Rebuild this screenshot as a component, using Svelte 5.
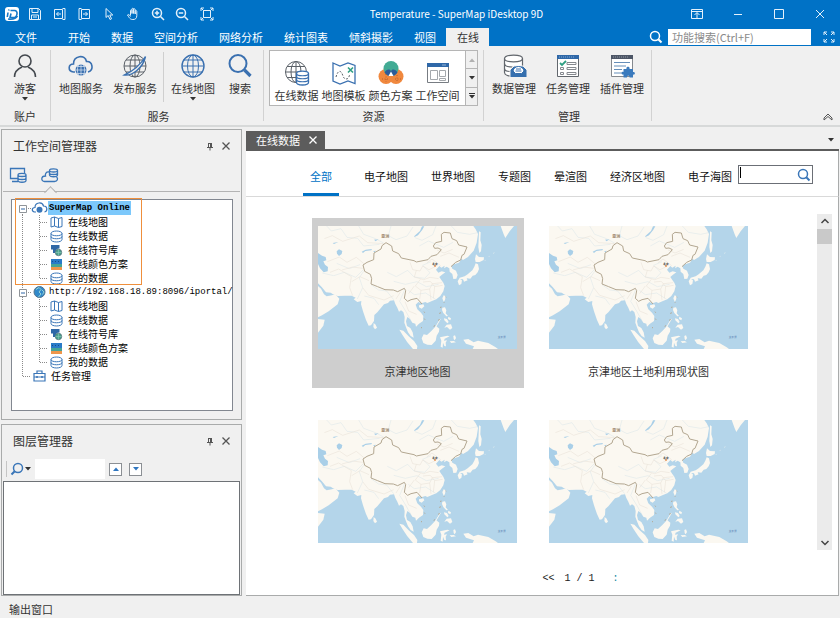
<script lang="ts">
	type Node = { text: string; icon: string; guides: string[]; latin?: boolean };

	const quick = ['save', 'back', 'forward', 'pointer', 'hand', 'zoomin', 'zoomout', 'extent'];
	const menus = ['开始', '数据', '空间分析', '网络分析', '统计图表', '倾斜摄影', '视图', '在线'];
	const gallery = [
		{ text: '在线数据', icon: 'globedata' },
		{ text: '地图模板', icon: 'template' },
		{ text: '颜色方案', icon: 'colors' },
		{ text: '工作空间', icon: 'workspace' }
	];
	const manage = [
		{ text: '数据管理', icon: 'datamgr' },
		{ text: '任务管理', icon: 'taskmgr' },
		{ text: '插件管理', icon: 'plugin' }
	];
	const children = [
		{ text: '在线地图', icon: 'map' },
		{ text: '在线数据', icon: 'db' },
		{ text: '在线符号库', icon: 'symbol' },
		{ text: '在线颜色方案', icon: 'scheme' },
		{ text: '我的数据', icon: 'db' }
	];
	const branch: Node[] = children.map((c, i) => ({
		...c,
		guides: ['line', i === children.length - 1 ? 'elbow' : 'tee']
	}));
	const tree: Node[] = [
		{ text: 'SuperMap Online', icon: 'cloud', guides: ['first'], latin: true },
		...branch,
		{ text: 'http://192.168.18.89:8096/iportal/', icon: 'earth', guides: ['box'], latin: true },
		...branch,
		{ text: '任务管理', icon: 'case', guides: ['elbow'] }
	];
	const categories = ['全部', '电子地图', '世界地图', '专题图', '晕渲图', '经济区地图', '电子海图'];
	const cards = ['京津地区地图', '京津地区土地利用现状图', '', ''];

	let activeMenu = $state('在线');
	let activeCategory = $state('全部');
	let selectedCard = $state(0);
	let selectedNode = $state(0);
	let keyword = $state('');
	let layerFilter = $state('');
	let command = $state('');
</script>

{#snippet quickIcon(name: string)}
	<svg class="qi" viewBox="0 0 14 14" aria-hidden="true">
		{#if name === 'save'}
			<path d="M1.5 1.5h9l2 2v9h-11zM4 1.5v4h6v-4M3.500 12.500v-4.500h7v4.500M5 10h4" />
		{:else if name === 'back'}
			<path d="M1.500 2.500h8v9h-8zM9.500 1.500h2.500v11h-2.500M8 7h-4.500M5.500 5l-2 2 2 2" />
		{:else if name === 'forward'}
			<path d="M4.500 2.500h8v9h-8zM4.500 1.500h-2.500v11h2.500M6 7h4.500M8.500 5l2 2-2 2" />
		{:else if name === 'pointer'}
			<path d="M4 1.500v9l2.200-2 1.800 4 1.500-.7-1.700-3.800h3z" />
		{:else if name === 'hand'}
			<path d="M4.500 8.500v-5c0-1 1.500-1 1.500 0V6.500v-4.500c0-1 1.600-1 1.600 0v4.500-4c0-1 1.600-1 1.600 0v4.500-2.700c0-1 1.600-1 1.600 0v4.200c0 3-1.500 4-3.800 4S4 12 1.500 8c.8-1 2-.3 3 1.500" />
		{:else if name === 'zoomin' || name === 'zoomout'}
			<g stroke-width="1.500">
				<circle cx="6" cy="6" r="4.500" />
				<path d="M9.500 9.500l3.500 3.500M3.800 6h4.400" />
				{#if name === 'zoomin'}<path d="M6 3.800v4.400" />{/if}
			</g>
		{:else}
			<path d="M3.500 3.500h7v7h-7zM1 4v-3h3M10 1h3v3M13 10v3h-3M4 13h-3v-3M1 1l2.500 2.500M13 1l-2.500 2.500M1 13l2.500-2.500M13 13l-2.500-2.500" />
		{/if}
	</svg>
{/snippet}

{#snippet ribbonIcon(name: string)}
	<svg class="ri" viewBox="0 0 26 26" aria-hidden="true">
		{#if name === 'user'}
			<g stroke="#44494f" stroke-width="1.600">
				<circle cx="13" cy="8" r="6" />
				<path d="M2.500 24c0-6 4-8.500 7.500-10M23.500 24c0-6-4-8.500-7.500-10" />
			</g>
		{:else if name === 'cloudmap'}
			<path d="M7 19H5.500C-.5 18.500 0 11 5.500 11 5.500 2.500 17 1 18.500 8.500c6-.5 8 8.500 1.500 10.500" stroke-width="1.600" />
			<circle cx="13" cy="17" r="5.500" fill="#3a70b0" stroke="none" />
			<path d="M7.500 17h11M13 11.500v11M9 13.500h8M9 20.500h8M10.500 12c-1.500 3-1.500 7 0 10M15.500 12c1.500 3 1.500 7 0 10" stroke="#dfe8f3" stroke-width=".7" />
		{:else if name === 'publish'}
			<g stroke="#5b6168">
				<circle cx="13" cy="13" r="11" />
				<ellipse cx="13" cy="13" rx="5" ry="11" />
				<path d="M13 2v22M2 13h22M4 7h18M4 19h18" />
			</g>
			<path d="M2.500 22C10 23 21 15 23.500 3.500 19 11 11 18 2.500 22z" fill="#f0f0f0" stroke-width="1.400" />
		{:else if name === 'globe'}
			<circle cx="13" cy="13" r="11" stroke-width="1.400" />
			<ellipse cx="13" cy="13" rx="5.500" ry="11" />
			<path d="M13 2v22M2 13h22M3.500 7h19M3.500 19h19" />
		{:else if name === 'search'}
			<circle cx="11" cy="10.500" r="8.500" stroke-width="2" />
			<path d="M17.500 17l6 6" stroke-width="3.200" />
		{:else if name === 'globedata'}
			<g stroke="#5b6168">
				<circle cx="12" cy="12" r="10.500" />
				<ellipse cx="12" cy="12" rx="5" ry="10.500" />
				<path d="M12 1.500v21M1.500 12h21M3 6.500h18M3 17.500h18" />
			</g>
			<path d="M12.500 13.500c0-3.300 12-3.300 12 0v9c0 3.300-12 3.300-12 0z" fill="#fff" stroke-width="1.300" />
			<path d="M12.500 13.500c0 3 12 3 12 0M12.500 16.500c0 3 12 3 12 0M12.500 19.500c0 3 12 3 12 0" stroke-width="1.200" />
		{:else if name === 'template'}
			<path d="M2 3l7 3 8-3 7 2.500v18l-7-2.500-8 3-7-3z" stroke-width="1.300" />
			<path d="M5 17c1-4 3-7 5-5s2 7 5 7 3-3 4-5" stroke="#5b6168" stroke-dasharray="2 1.500" />
			<path d="M17 7.500l5 5M22 7.500l-5 5" stroke="#2f9f83" stroke-width="1.600" />
		{:else if name === 'colors'}
			<g stroke="none">
				<circle cx="8" cy="16.500" r="7.500" fill="#f0883e" />
				<circle cx="18" cy="16.500" r="7.500" fill="#f0883e" />
				<circle cx="13" cy="8.500" r="7.500" fill="#42ab94" />
				<path d="M6.500 12.500c1.500-3 5.500-4.500 6.500-1 1-3.500 5-2 6.500 1-2 3-4 3.500-6.500 3.500s-4.500-.5-6.500-3.500z" fill="#2c5c99" />
				<path d="M13 11.500l2.500 4.500h-5z" fill="#fff" />
			</g>
			<path d="M8 14v8M4 19h6M17 19h6M19 15v7" stroke="#a65728" stroke-width=".8" stroke-dasharray="1 1.500" />
		{:else if name === 'workspace'}
			<path d="M2.500 4.500h21v18h-21z" fill="#fff" stroke="#777c82" />
			<path d="M2 3h22v4H2z" fill="#2f68a8" stroke="none" />
			<path d="M17.500 5h4" stroke="#fff" stroke-dasharray="1 1" />
			<path d="M5.500 10.500h7v9h-7zM14.500 10.500h6v6h-6zM14.500 18.500h6v2h-6z" stroke="#a4a8ac" />
		{:else if name === 'datamgr'}
			<path d="M3.500 5.500c0-4.500 18-4.500 18 0v14c0 5-18 5-18 0z" fill="#fff" stroke="#62676d" stroke-width="1.200" />
			<path d="M3.500 5.500c0 4.500 18 4.500 18 0M3.500 10.500c0 2.500 4 3.500 8 3.500M3.500 15.500c0 2 3 3 5.500 3" stroke="#62676d" stroke-width="1.200" />
			<path d="M9 17l4-4h9l4 4v7.500H9z" fill="#356fae" stroke="#f0f0f0" />
			<path d="M12 18c1-6 10-6 11 0l-2.500 2.500h-6z" fill="#fff" stroke="#356fae" />
			<path d="M15 16h5M14.500 18h6" />
		{:else if name === 'taskmgr'}
			<path d="M2.500 3.500h21v20h-21z" fill="#fff" stroke="#62676d" />
			<path d="M2 2h22v4H2z" fill="#2f68a8" stroke="none" />
			<path d="M4 4h16" stroke="#80a7d1" stroke-dasharray="1 1" />
			<path d="M5 10l2 2 4-4" stroke="#2f9f83" stroke-width="1.800" />
			<path d="M12 9.500h9v2h-9zM12 14.500h9v2h-9zM12 19.500h9v2h-9zM5.500 14.500h3v2h-3zM5.500 19.500h3v2h-3z" stroke="#85898e" />
		{:else if name === 'plugin'}
			<path d="M2.500 3.500h21v20h-21z" fill="#fff" stroke="#85898e" />
			<path d="M2 2h22v4H2z" fill="#4d5666" stroke="none" />
			<path d="M4 4h16" stroke="#9198a3" stroke-dasharray="1 1" />
			<path d="M5 9.500h16M5 13h12M5 16.500h8M5 20h8" stroke="#658eb9" />
			<path d="M14.500 16h3c-1-3 4-3 3 0h3.500v3c2.500-.8 2.500 3.500 0 2.500v3h-3.500c.7-2.500-3-2.500-2.500 0h-3.500v-3c-2.500.8-2.500-3.500 0-2.500z" fill="#3a7abd" stroke="none" />
		{/if}
	</svg>
{/snippet}

{#snippet treeIcon(name: string)}
	<svg class="cell" viewBox="0 0 17 14" fill="none" stroke="#3a76b8" aria-hidden="true">
		{#if name === 'cloud'}
			<path d="M5 11H3.500C.5 10.500.5 6.500 4 6.500 4 1 11.500.5 12.500 5c4-.3 4.500 5.500 1 6" stroke-width="1.200" />
			<circle cx="8.500" cy="8.800" r="3" fill="#3a76b8" stroke="none" />
		{:else if name === 'map'}
			<path d="M3 3l3.500-1 4 1.500 3.500-1v9l-3.500 1-4-1.500-3.500 1zM6.500 2v9M10.500 3.500v9" />
		{:else if name === 'db'}
			<path d="M3 4.500c0-3.300 11-3.300 11 0v6c0 3.300-11 3.300-11 0zM3 4.500c0 3 11 3 11 0M3 7.500c0 3 11 3 11 0" />
		{:else if name === 'symbol'}
			<path d="M3 2h8.500v3.500c-3 0-4 2-4 4.500H5V6.500H3z" fill="#2e67a6" stroke="none" />
			<circle cx="10.500" cy="9.500" r="3.200" fill="#4ba48e" stroke="#57707a" stroke-width=".8" />
			<path d="M7.500 9.500h6M10.500 6.500v6" stroke="#8fc9ba" stroke-width=".6" />
		{:else if name === 'scheme'}
			<g stroke="none">
				<path d="M3 2h11v5H3z" fill="#2a7bc8" />
				<path d="M3 7h11v3H3z" fill="#46a497" />
				<path d="M3 10h11v3H3z" fill="#ee964b" />
			</g>
			<path d="M4 4.500h9" stroke="#164d8b" stroke-dasharray="1 2" />
		{:else if name === 'earth'}
			<circle cx="8.500" cy="7" r="5.500" fill="#3189c9" stroke="#55748d" />
			<path d="M5 4.500l3-2 2 2-2 2.500 2 2-2.500 3M11 5l2 2-1.500 2.500" stroke="#93d2d6" />
		{:else}
			<path d="M3 4.500h11v7.500H3zM6 4V2h5v2M3 8h11" stroke-width="1.200" />
			<path d="M6 7v2M11 7v2" stroke-width="1.500" />
		{/if}
	</svg>
{/snippet}

{#snippet guide(kind: string)}
	<svg class="cell" viewBox="0 0 17 14" fill="none" aria-hidden="true">
		<g stroke="#8a8a8a" stroke-dasharray="1 1">
			{#if kind === 'line'}
				<path d="M8.500 0v14" />
			{:else if kind === 'tee'}
				<path d="M8.500 0v14M9 7.500h8" />
			{:else if kind === 'elbow'}
				<path d="M8.500 0v8M9 7.500h8" />
			{:else if kind === 'first'}
				<path d="M8.500 11v3M12 7.500h5" />
			{:else}
				<path d="M8.500 0v14M12 7.500h5" />
			{/if}
		</g>
		{#if kind === 'first' || kind === 'box'}
			<path d="M5.500 4.500h7v7h-7z" fill="#fff" stroke="#8f9499" />
			<path d="M7 8h4" stroke="#2e67a6" />
		{/if}
	</svg>
{/snippet}

{#snippet lens()}
	<svg class="lens" viewBox="0 0 14 14" fill="none" stroke="currentColor" stroke-width="1.500" aria-hidden="true">
		<circle cx="6" cy="6" r="4.500" />
		<path d="M9.300 9.300l3.200 3.200" stroke-width="2" />
	</svg>
{/snippet}

{#snippet arrow()}
	<svg class="arrow" viewBox="0 0 6 4" fill="currentColor" aria-hidden="true"><path d="M0 0h6l-3 3.500z" /></svg>
{/snippet}

{#snippet cross()}
	<svg class="cross" viewBox="0 0 10 10" fill="none" stroke="currentColor" aria-hidden="true">
		<path d="M1.500 1.500l7 7M8.500 1.500l-7 7" stroke-width="1.300" />
	</svg>
{/snippet}

{#snippet tool(text: string, icon: string, drop: boolean)}
	<button class="tool">
		{@render ribbonIcon(icon)}
		<span>{text}</span>
		{#if drop}{@render arrow()}{/if}
	</button>
{/snippet}

{#snippet paneTitle(text: string)}
	<header class="pane-title">
		<h2>{text}</h2>
		<button aria-label="固定">
			<svg class="cross" viewBox="0 0 10 10" fill="none" stroke="currentColor" aria-hidden="true">
				<path d="M3.500 2v4M3 2.500h4M6.500 2v4M5.500 2v4M2 6.500h6M5 7v2.500" />
			</svg>
		</button>
		<button aria-label="关闭">{@render cross()}</button>
	</header>
{/snippet}

{#snippet worldMap()}
	<svg class="map" viewBox="38 48 597 369" aria-hidden="true">
		<rect x="38" y="48" width="597" height="369" fill="#b4d5ea" />
		<g fill="#fbf8f1">
			<path d="M38 48H504L511 58 518 72 514 98 505 122 488 141 473 150 468 146 461 158 446 163 438 168 441 176 452 182 457 195 453 206 444 207 441 192 433 185 432 175 424 170 416 175 418 167 408 173 402 168 392 179 399 188 409 184 420 187 408 196 402 201 408 210 414 218 418 228 414 244 405 258 393 268 380 273 366 279 360 276 348 280 339 276 331 284 336 298 347 308 354 318 353 333 341 341 332 350 330 341 321 338 314 327 306 321 302 334 305 348 315 354 322 367 325 383 316 378 308 367 302 352 297 338 298 321 294 306 287 301 281 305 276 293 270 282 266 271 254 272 248 279 236 283 216 307 207 315 206 333 197 346 190 347 182 330 173 304 167 283 168 273 156 276 145 268 151 263 139 257 119 257 97 258 83 253 76 248 62 247 49 231 38 220z" />
			<path d="M38 228l9 8 9 17 8 6 16-3 10-3 12 13-5 17-27 21-20 12-12 6z" />
			<path d="M38 327l20 2-4 18-16 21z" />
			<path d="M205 339l6 5 4 9-6 5-5-7z" />
			<path d="M282 359l12 3 16 17 16 14 10 15-1 9h-12l-17-20-13-20z" />
			<path d="M355 373l10 2 13-12 14-15 10 8-1 9-7 12-3 15-12 13-13-1-12-5-5-14z" />
			<path d="M404 382l22-5 7 2-15 7-2 6 9-1-4 7 1 11-5-1-4-10-1 15-6-3 2-18z" />
			<path d="M411 293l8-1 4 9-2 9 7 8-5 1-9-10-4-9zM416 325l9 2 5 9-4 4-9-9zM429 320l8 5-2 6-7-4zM424 344l13-1 4 11-7 5-9-8-8 2z" />
			<path d="M415 256l6 3-2 11-4 5-4-10zM341 286l13-3 3 6-8 7-8-4zM404 326l2 2-14 24-2-2z" />
			<path d="M512 133l9 8 15 1-1 8-12 6-12 0-2-9z" />
			<path d="M511 160l7 3 3 14-4 10-7 8-8 2-7 9-10-1-8 7-6-5-11 2 3-6 15-4 9-6 14-12 6-11zM461 207l9 4-2 11-7 4-4-12zM473 207l11-1 3 5-11 4z" />
			<path d="M521 64l5 3-1 24 4 14-2 19-5 5-3-18 1-22z" />
			<path d="M586 48h40l-13 16-13 20-5-11z" />
			<path d="M474 389l15-2 16 10 13-5 31 7 22 13 7 5h-76l4-8-24-8z" />
			<path d="M444 378l5-2 3 8-4 7-3-4zM433 394l12-1 7 4-14 2zM538 151l3-2-2 4zM550 139l3-2-2 4zM564 130l3-4-1 5z" />
		</g>
		<g fill="#a9cfe8">
			<path d="M38 129l12 8 11 4 2 10-9 3 5 10 9 7-1 13-12 3-11-12-6-13z" />
			<path d="M94 124l7-6 10 5-2 9-8 6-6-7zM169 125l12-6 19-2-2 4-18 2-7 6zM357 49l-6 10-13 17-12 6 2-5 16-14 6-14z" />
			<path d="M82 99l17-3-13 6zM206 89l14-2-9 7zM203 124l8-2-3 5z" />
		</g>
		<g fill="none" stroke="#d9e5e9" stroke-width="1.500">
			<path d="M64 48l14 15 29-7 18 26 32 3 18 23 48-5M160 48l15 25 31 11 29 15M257 48l-8 29 23 12 33-11 18-27M392 48l-10 26-32 17-21-8M438 48l18 19 37 6 24-5" />
			<path d="M51 189l34 8 32-10 34 15 22-22M94 160l38 16 32-12M156 267l16-34-10-30 13-19M197 224l23 16 24 3 21 26M220 284l-14-19-29-7M298 239l-15 35 16 26 18 32" />
			<path d="M246 187l27 13 34-19 19 20 32 4 16-17-22-22 25-11M265 214l35 9 35-8 28 15 37-7M309 241l18 13 34-5 30 19M342 108l27-15 46 19 28-15" />
		</g>
		<g fill="none" stroke="#e7dfd4" stroke-width="1.500">
			<path d="M57 86l24-9 31 17 50-16 25 20 53 3M66 155l36-14 23 16 28-15 25 21M74 187l26-10 38 23-5 33 9 24M110 180l32-9 30 4M139 215l25-15 27 12M172 233l18 23 46 14 29-13M286 245l-14 22M299 275l11 28 24 10" />
			<path d="M314 157l8 22 22 4 8-15 19 11 19-9M333 181l-6 20 28 8 19-7 26 4M345 208l-15 20 17 13 26-4 8-16 30-3M327 228l-17 23M347 241l-4 26M373 237l4 33M353 216l22-2 13 16 24-4M388 230l-4 35M364 159l16-12 26 20M395 120l21 9 26-11M405 139l26-10 30 13" />
		</g>
		<g fill="none" stroke="#b3a791" stroke-width="3">
			<path d="M242 98l-12 9-3 10-21 12-1 20-20 8-12 8 5 19 17 9 4 13-2 16 20 8 22 9 25 1 13 5 20-10 4 7-4 23 10 9 10-5 18-4 15 17" />
			<path d="M242 98l17 10 3 15 18 8 8 13 38 8 7 4 35-7 9-10 18-5 13-15-10-5-10 1-4-7 7-10 18-4-1-21 8-6 19 2 5 17 14 6 6 13 25 6-9 22-6 3-4 14-15 7-14 13" />
			<path d="M421 260l1 2M417 276l-1 2M407 290l-1 4M405 307l-2 5M402 327l-2 5M389 347l-4 2M356 305l2 3M357 326l2 3M347 352l3 2" />
		</g>
		<circle cx="389" cy="168" r="3" fill="#e9985d" />
		<text x="240" y="83" fill="#9a846a">亚洲</text>
		<text x="389" y="164" fill="#222" class="city">北京</text>
		<text x="589" y="385" fill="#6389b8" class="city">太平洋</text>
	</svg>
{/snippet}

<div class="app">
	<header class="titlebar">
		<svg class="logo" viewBox="0 0 14 14" aria-hidden="true">
			<rect width="14" height="14" rx="3" fill="#fff" />
			<path d="M3 5.500L2.300 10M4 2.500l-.3 1M5.500 3.500h4c4 0 3 7-1 7h-3.500l1-4M3 12c4 .5 8 0 9.500-3" fill="none" stroke="#1478c8" stroke-width="1.600" />
		</svg>
		<nav class="quick">
			{#each quick as name}
				<button aria-label={name}>{@render quickIcon(name)}</button>
			{/each}
		</nav>
		<h1>Temperature - SuperMap iDesktop 9D</h1>
		<div class="window">
			<button aria-label="功能区">
				<svg class="qi" viewBox="0 0 14 14"><path d="M1.500 2.500h11v9h-11zM1.500 4.500h11M7 11v-5M4.500 8l2.500-2.500 2.500 2.500" /></svg>
			</button>
			<button aria-label="最小化"><svg class="qi" viewBox="0 0 14 14"><path d="M3 7.500h8" /></svg></button>
			<button aria-label="最大化"><svg class="qi" viewBox="0 0 14 14"><path d="M2.500 2.500h9v9h-9z" /></svg></button>
			<button aria-label="关闭窗口"><svg class="qi" viewBox="0 0 14 14"><path d="M3 3l8 8M11 3l-8 8" /></svg></button>
		</div>
	</header>

	<nav class="menubar">
		<button class="file">文件</button>
		{#each menus as menu}
			<button class:active={activeMenu === menu} onclick={() => (activeMenu = menu)}>{menu}</button>
		{/each}
		<label class="command">
			{@render lens()}
			<input type="text" placeholder="功能搜索(Ctrl+F)" bind:value={command} />
		</label>
		<button class="full" aria-label="全屏">
			<svg class="qi" viewBox="0 0 14 14">
				<path d="M2 5v-3h3M9 2h3v3M12 9v3h-3M5 12h-3v-3M2 2l3 3M12 2l-3 3M12 12l-3-3M2 12l3-3" />
			</svg>
		</button>
	</nav>

	<section class="ribbon">
		<div class="group account">
			<div class="tools">{@render tool('游客', 'user', true)}</div>
			<p>账户</p>
		</div>
		<div class="group service">
			<div class="tools">
				{@render tool('地图服务', 'cloudmap', false)}
				{@render tool('发布服务', 'publish', false)}
				<i class="divider"></i>
				{@render tool('在线地图', 'globe', true)}
				<div class="narrow">{@render tool('搜索', 'search', false)}</div>
			</div>
			<p>服务</p>
		</div>
		<div class="group resource">
			<div class="gallery">
				{#each gallery as item}
					{@render tool(item.text, item.icon, false)}
				{/each}
				<div class="spin">
					<button class="up" aria-label="向上" disabled>{@render arrow()}</button>
					<button aria-label="向下">{@render arrow()}</button>
					<button class="more" aria-label="更多">{@render arrow()}</button>
				</div>
			</div>
			<p>资源</p>
		</div>
		<div class="group manage">
			<div class="tools">
				{#each manage as item}
					{@render tool(item.text, item.icon, false)}
				{/each}
			</div>
			<p>管理</p>
		</div>
		<button class="collapse" aria-label="折叠功能区">
			<svg class="cross" viewBox="0 0 10 10" fill="none" stroke="currentColor"><path d="M1 5l4-4 4 4v2l-4-3.500-4 3.500z" /></svg>
		</button>
	</section>

	<main>
		<aside>
			<section class="pane workspace">
				{@render paneTitle('工作空间管理器')}
				<div class="modes">
					<button aria-label="本地">
						<svg viewBox="0 0 18 16" fill="none" stroke="#3a76b8" stroke-width="1.300">
							<path d="M9 11.500H1.500v-10h14v5M3 14.500h6" />
							<path d="M9 8c0-2.300 8-2.300 8 0v5.500c0 2.300-8 2.300-8 0zM9 8c0 2 8 2 8 0M9 11c0 2 8 2 8 0" />
						</svg>
					</button>
					<button class="on" aria-label="在线">
						<svg viewBox="0 0 18 16" fill="none" stroke="#3a76b8" stroke-width="1.300">
							<path d="M8 5C5 4.500 4 7 4.500 9-.5 9 0 14.500 3.500 14.500h10c3 0 4-3 2-4.500" />
							<path d="M8.500 3.500c0-2.300 8-2.300 8 0V8c0 2.300-8 2.300-8 0zM8.500 3.500c0 2 8 2 8 0M8.500 6c0 2 8 2 8 0" />
						</svg>
					</button>
				</div>
				<div class="tree">
					<ul>
						{#each tree as node, i}
							<li>
								{#each node.guides as kind}{@render guide(kind)}{/each}
								{@render treeIcon(node.icon)}
								<button
									class:latin={node.latin}
									class:selected={selectedNode === i}
									onclick={() => (selectedNode = i)}>{node.text}</button
								>
							</li>
						{/each}
					</ul>
					<div class="marker"></div>
				</div>
			</section>

			<section class="pane layers">
				{@render paneTitle('图层管理器')}
				<div class="filter">
					<button class="find" aria-label="查找">{@render lens()}{@render arrow()}</button>
					<input type="text" aria-label="图层" bind:value={layerFilter} />
					<button class="step up" aria-label="上一个">{@render arrow()}</button>
					<button class="step" aria-label="下一个">{@render arrow()}</button>
				</div>
				<div class="list"></div>
			</section>
		</aside>

		<section class="doc">
			<header class="doc-tabs">
				<div class="doc-tab">
					<span>在线数据</span>
					<button aria-label="关闭标签">{@render cross()}</button>
				</div>
				<button class="doc-menu" aria-label="窗口列表">{@render arrow()}</button>
			</header>
			<nav class="categories">
				{#each categories as category}
					<button class:active={activeCategory === category} onclick={() => (activeCategory = category)}>
						{category}
					</button>
				{/each}
				<label class="keyword">
					<i class="caret"></i>
					<input type="text" aria-label="搜索" bind:value={keyword} />
					{@render lens()}
				</label>
			</nav>
			<div class="results">
				<div class="grid">
					{#each cards as title, i}
						<button class="card" class:selected={selectedCard === i} onclick={() => (selectedCard = i)} aria-label={title || '地图'}>
							{@render worldMap()}
							<span>{title}</span>
						</button>
					{/each}
				</div>
				<div class="scroll">
					<svg class="cross" viewBox="0 0 10 10" fill="none" stroke="currentColor" stroke-width="1.500"><path d="M1.500 7L5 3.500 8.500 7" /></svg>
					<i class="thumb"></i>
					<svg class="cross" viewBox="0 0 10 10" fill="none" stroke="currentColor" stroke-width="1.500"><path d="M1.500 3L5 6.500 8.500 3" /></svg>
				</div>
			</div>
			<footer class="pager">
				<button>&lt;&lt;</button>
				<span>1 / 1</span>
				<button class="next">:</button>
			</footer>
		</section>
	</main>

	<footer class="status"><button>输出窗口</button></footer>
</div>

<style>
	:global(body) {
		margin: 0;
	}
	.app {
		display: flex;
		flex-direction: column;
		height: 100vh;
		min-height: 600px;
		overflow: hidden;
		background: #f0f0f0;
		color: #333;
		font: 11px/16px 'Noto Sans CJK SC', sans-serif;
	}
	.app * {
		box-sizing: border-box;
	}
	svg {
		display: block;
		flex: none;
	}
	button,
	input {
		border: 0;
		margin: 0;
		padding: 0;
		font: inherit;
		color: inherit;
		background: none;
		outline: none;
	}
	button {
		white-space: nowrap;
	}
	h1,
	h2,
	p,
	ul {
		margin: 0;
		padding: 0;
		font-weight: normal;
	}
	.arrow {
		width: 6px;
		height: 4px;
	}
	.cross {
		width: 10px;
		height: 10px;
	}
	.lens {
		width: 14px;
		height: 14px;
	}
	.qi {
		width: 14px;
		height: 14px;
		fill: none;
		stroke: #e4f1fb;
	}

	/* title bar */
	.titlebar {
		display: flex;
		align-items: center;
		flex: none;
		height: 28px;
		padding-left: 5px;
		background: #0072c6;
		color: #fff;
	}
	.logo {
		width: 14px;
		height: 14px;
	}
	.quick {
		display: flex;
		width: 196px;
		margin-left: 4px;
	}
	.quick button {
		display: flex;
		justify-content: center;
		flex: 1;
	}
	h1 {
		flex: 1;
		padding-left: 18px;
		text-align: center;
		font-size: 10px;
	}
	.window {
		display: flex;
	}
	.window button {
		display: flex;
		justify-content: center;
		width: 41px;
	}

	/* menu */
	.menubar {
		display: flex;
		flex: none;
		height: 18px;
		background: #0072c6;
		color: #fff;
	}
	.menubar > button {
		padding: 0 10px 0 11px;
		line-height: 18px;
	}
	.menubar > .file {
		padding: 0 20px 0 15px;
	}
	.menubar > .active {
		background: #f0f0f0;
		color: #333;
	}
	.command {
		display: flex;
		align-items: center;
		gap: 5px;
		margin-left: auto;
	}
	.command input {
		width: 143px;
		height: 16px;
		padding: 0 4px;
		background: #fff;
		color: #333;
	}
	.command input::placeholder {
		color: #8a8a8a;
		opacity: 1;
	}
	.menubar > .full {
		padding: 0 4px 0 11px;
	}

	/* ribbon */
	.ribbon {
		display: flex;
		flex: none;
		height: 81px;
		border-bottom: 2px solid #d7d9d9;
	}
	.group {
		display: flex;
		flex-direction: column;
		justify-content: space-between;
		margin: 4px 0;
		border-right: 1px solid #d2d2d2;
		text-align: center;
	}
	.group p {
		line-height: 10px;
	}
	.account {
		width: 51px;
	}
	.service {
		width: 213px;
		padding-left: 3px;
	}
	.resource {
		width: 220px;
		padding: 0 5px;
	}
	.manage {
		width: 168px;
		padding-left: 3px;
	}
	.tools {
		display: flex;
		justify-content: flex-start;
	}
	.account .tools {
		justify-content: center;
	}
	.tool {
		display: flex;
		flex-direction: column;
		align-items: center;
		width: 54px;
		padding-top: 3px;
	}
	.tool span {
		height: 18px;
		line-height: 18px;
	}
	.ri {
		width: 26px;
		height: 26px;
		fill: none;
		stroke: #3a70b0;
	}
	.divider {
		width: 1px;
		height: 50px;
		margin: 2px 2px 0 1px;
		background: #cfcfcf;
	}
	.narrow .tool {
		width: 40px;
	}
	.gallery {
		display: flex;
		height: 56px;
		padding-left: 3px;
		border: 1px solid #b5b5b5;
		background: #fff;
	}
	.gallery .tool {
		flex: 1;
		width: auto;
		padding-top: 9px;
	}
	.spin {
		display: flex;
		flex-direction: column;
		width: 12px;
		margin-left: 4px;
		border-left: 1px solid #b5b5b5;
		background: #f0f0f0;
	}
	.spin button {
		display: flex;
		flex: 1;
		flex-direction: column;
		align-items: center;
		justify-content: center;
	}
	.spin button + button {
		border-top: 1px solid #b5b5b5;
	}
	.up .arrow {
		transform: rotate(180deg);
	}
	.spin .up {
		color: #b0b0b0;
	}
	.more::before {
		content: '';
		width: 6px;
		height: 1px;
		margin-bottom: 1px;
		background: #333;
	}
	.collapse {
		align-self: flex-end;
		margin: 0 7px 2px auto;
		color: #555;
	}

	main {
		display: flex;
		flex: 1;
		min-height: 0;
		gap: 4px;
		padding: 2px 1px 0;
	}

	/* left panes */
	aside {
		display: flex;
		flex-direction: column;
		flex: none;
		width: 241px;
		gap: 4px;
	}
	.pane {
		display: flex;
		flex-direction: column;
		border: 1px solid #a9abab;
	}
	.workspace {
		flex: 1;
		min-height: 0;
	}
	.pane-title {
		display: flex;
		align-items: center;
		gap: 6px;
		height: 32px;
		padding: 0 10px 0 11px;
	}
	.pane-title h2 {
		flex: 1;
		font-size: 12px;
	}
	.pane-title button {
		color: #555;
	}
	.modes {
		display: flex;
		gap: 14px;
		height: 30px;
		margin: 0 1px;
		padding: 5px 6px 0;
		border-bottom: 1px solid #b3b3b3;
	}
	.modes svg {
		width: 18px;
		height: 16px;
	}
	.modes button {
		position: relative;
		height: 16px;
	}
	.modes .on::after {
		content: '';
		position: absolute;
		left: 5px;
		top: 21px;
		width: 8px;
		height: 8px;
		border: solid #b3b3b3;
		border-width: 1px 0 0 1px;
		background: linear-gradient(135deg, #f0f0f0 50%, transparent 50%);
		transform: rotate(45deg);
	}
	.tree {
		position: relative;
		flex: 1;
		min-height: 0;
		margin: 7px 8px 8px 9px;
		padding: 1px 2px;
		border: 1px solid #828790;
		background: #fff;
	}
	.tree li {
		display: flex;
		height: 14px;
	}
	.cell {
		width: 17px;
		height: 14px;
	}
	.tree li button {
		padding: 0 3px;
		font-size: 10px;
		line-height: 14px;
		color: #000;
	}
	.tree li .latin {
		padding: 0 1px;
		font-family: 'Liberation Mono', monospace;
		font-size: 9px;
	}
	.tree li .selected {
		background: #7cc8fb;
	}
	.tree li .latin.selected {
		font-weight: bold;
	}
	.marker {
		position: absolute;
		left: 3px;
		top: -2px;
		width: 127px;
		height: 87px;
		border: 1px solid #ef8f3c;
		pointer-events: none;
	}
	.filter {
		display: flex;
		align-items: center;
		height: 24px;
		padding-left: 4px;
	}
	.find {
		display: flex;
		align-items: center;
		gap: 1px;
		height: 16px;
		margin-right: 4px;
		padding-left: 3px;
		border-left: 1px solid #c5c5c5;
	}
	.find .lens {
		color: #3a76b8;
		transform: scaleX(-1);
	}
	.filter input {
		width: 70px;
		height: 20px;
		background: #fff;
	}
	.step {
		display: flex;
		align-items: center;
		justify-content: center;
		width: 13px;
		height: 13px;
		margin: 0 3px 0 4px;
		border: 1px solid #8b8f94;
		background: #fff;
		color: #2f76c0;
	}
	.list {
		height: 114px;
		margin: 0 1px;
		border: 1px solid #6e7276;
		background: #fff;
	}

	/* document */
	.doc {
		display: flex;
		flex-direction: column;
		flex: 1;
		min-width: 0;
		border-bottom: 1px solid #a9abab;
	}
	.doc-tabs {
		display: flex;
		justify-content: space-between;
		flex: none;
		height: 22px;
		padding-top: 2px;
		border-bottom: 2px solid #5c5c5c;
	}
	.doc-tab {
		display: flex;
		align-items: center;
		gap: 8px;
		padding: 0 7px 0 10px;
		background: #5c5c5c;
		color: #fff;
	}
	.doc-tab span {
		line-height: 18px;
	}
	.doc-menu {
		padding-right: 5px;
	}
	.categories {
		display: flex;
		align-items: flex-end;
		justify-content: flex-end;
		flex: none;
		gap: 23px;
		height: 46px;
		padding-right: 25px;
		border-right: 1px solid #a9abab;
		border-bottom: 1px solid #d9d9d9;
		background: #fff;
	}
	.categories button {
		height: 32px;
		padding-bottom: 5px;
		border-bottom: 3px solid transparent;
		color: #111;
	}
	.categories .active {
		margin-right: 2px;
		padding: 0 7px 5px;
		border-bottom-color: #0072c6;
		color: #0072c6;
	}
	.keyword {
		display: flex;
		align-items: center;
		align-self: flex-start;
		width: 75px;
		height: 19px;
		margin: 14px 0 0 -17px;
		padding: 1px;
		border: 1px solid #6b6f76;
		color: #3a76b8;
	}
	.keyword input {
		flex: 1;
		min-width: 0;
		height: 15px;
	}
	.caret {
		align-self: flex-start;
		width: 1px;
		height: 11px;
		background: #000;
	}
	.results {
		display: flex;
		flex: 1;
		min-height: 0;
		padding-right: 6px;
		border-right: 1px solid #a9abab;
		background: #fff;
	}
	.grid {
		display: grid;
		grid-template-columns: repeat(2, 212px);
		grid-auto-rows: 170px;
		gap: 24px 19px;
		flex: 1;
		justify-content: center;
		padding: 21px 0 0 4px;
		overflow: hidden;
	}
	.card {
		display: flex;
		flex-direction: column;
		gap: 14px;
		padding: 8px 7px 0 6px;
	}
	.card.selected {
		background: #cecece;
	}
	.map {
		width: 100%;
		height: auto;
	}
	.map text {
		font-size: 12px;
		font-weight: bold;
		text-anchor: middle;
	}
	.map .city {
		font-size: 8px;
	}
	.card span {
		align-self: center;
	}
	.scroll {
		display: flex;
		flex-direction: column;
		align-items: center;
		width: 15px;
		margin-top: 17px;
		padding: 2px 0;
		background: #ebebeb;
		color: #444;
	}
	.thumb {
		width: 15px;
		height: 15px;
		margin: 3px 0 auto;
		background: #c9c9c9;
	}
	.pager {
		display: flex;
		align-items: center;
		flex: none;
		gap: 10px;
		height: 45px;
		padding: 12px 0 0 50%;
		border-right: 1px solid #a9abab;
		background: #fff;
		font: 10px/16px 'Liberation Mono', monospace;
		color: #222;
	}
	.next {
		margin-left: 8px;
		color: #1686a0;
	}
	.status {
		flex: none;
		height: 22px;
		padding: 5px 9px 0;
	}
</style>
